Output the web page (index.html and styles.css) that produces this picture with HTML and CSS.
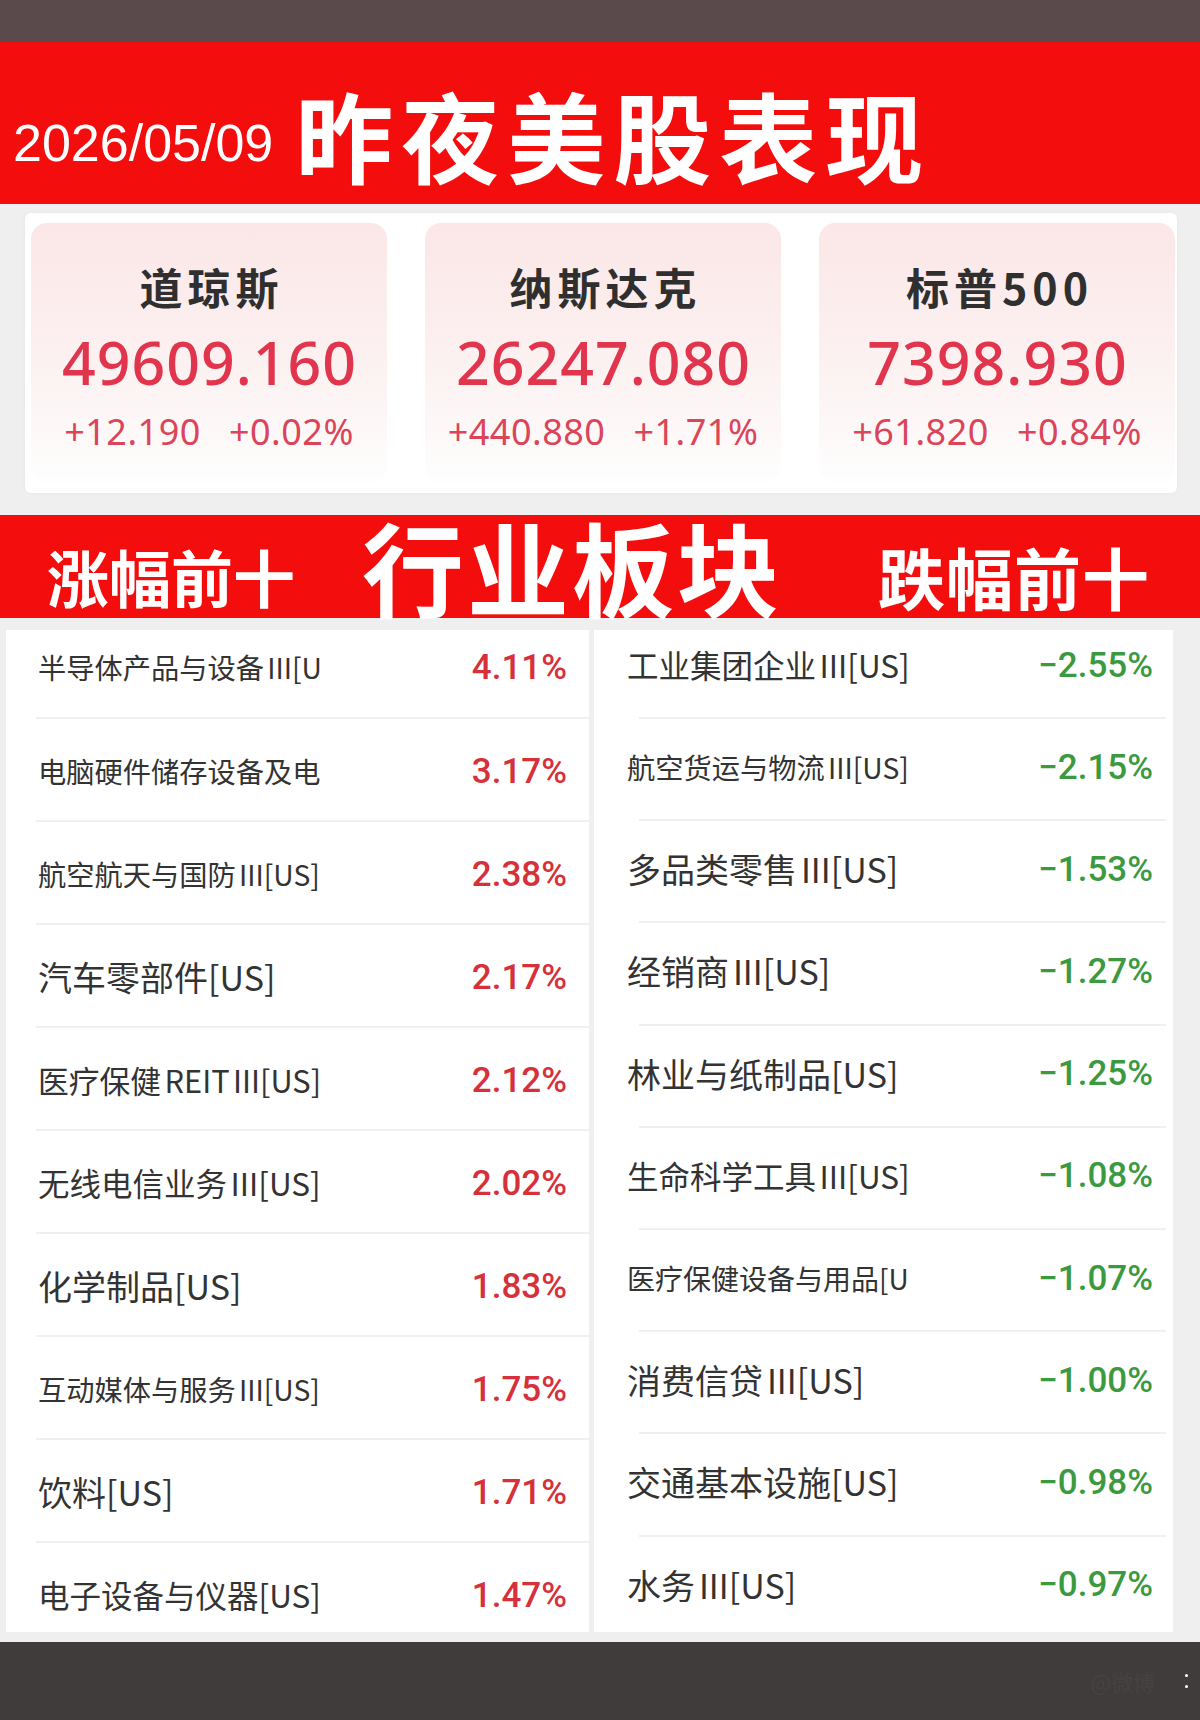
FILE: index.html
```html
<!DOCTYPE html>
<html lang="zh-CN">
<head>
<meta charset="utf-8">
<title>昨夜美股表现</title>
<link rel="stylesheet" href="styles.css">
</head>
<body>
<div class="page">
  <div class="topbar"></div>
  <header class="hero">
    <span class="date">2026/05/09</span>
    <h1 class="title">昨夜美股表现</h1>
  </header>
  <section class="indices">
    <div class="index-wrap">
      <div class="card">
        <div class="card-name">道琼斯</div>
        <div class="card-value">49609.160</div>
        <div class="card-change"><span>+12.190</span><span>+0.02%</span></div>
      </div>
      <div class="card">
        <div class="card-name">纳斯达克</div>
        <div class="card-value">26247.080</div>
        <div class="card-change"><span>+440.880</span><span>+1.71%</span></div>
      </div>
      <div class="card">
        <div class="card-name">标普500</div>
        <div class="card-value">7398.930</div>
        <div class="card-change"><span>+61.820</span><span>+0.84%</span></div>
      </div>
    </div>
  </section>
  <section class="band">
    <span class="band-side">涨幅前十</span>
    <span class="band-title">行业板块</span>
    <span class="band-side right">跌幅前十</span>
  </section>
  <section class="tables">
    <div class="panel up">
      <div class="row"><span class="name">半导体产品与设备 III[U</span><span class="pct">4.11%</span></div>
      <div class="row"><span class="name">电脑硬件储存设备及电</span><span class="pct">3.17%</span></div>
      <div class="row"><span class="name">航空航天与国防 III[US]</span><span class="pct">2.38%</span></div>
      <div class="row"><span class="name">汽车零部件[US]</span><span class="pct">2.17%</span></div>
      <div class="row"><span class="name">医疗保健 REIT III[US]</span><span class="pct">2.12%</span></div>
      <div class="row"><span class="name">无线电信业务 III[US]</span><span class="pct">2.02%</span></div>
      <div class="row"><span class="name">化学制品[US]</span><span class="pct">1.83%</span></div>
      <div class="row"><span class="name">互动媒体与服务 III[US]</span><span class="pct">1.75%</span></div>
      <div class="row"><span class="name">饮料[US]</span><span class="pct">1.71%</span></div>
      <div class="row"><span class="name">电子设备与仪器[US]</span><span class="pct">1.47%</span></div>
    </div>
    <div class="panel down">
      <div class="row"><span class="name">工业集团企业 III[US]</span><span class="pct">−2.55%</span></div>
      <div class="row"><span class="name">航空货运与物流 III[US]</span><span class="pct">−2.15%</span></div>
      <div class="row"><span class="name">多品类零售 III[US]</span><span class="pct">−1.53%</span></div>
      <div class="row"><span class="name">经销商 III[US]</span><span class="pct">−1.27%</span></div>
      <div class="row"><span class="name">林业与纸制品[US]</span><span class="pct">−1.25%</span></div>
      <div class="row"><span class="name">生命科学工具 III[US]</span><span class="pct">−1.08%</span></div>
      <div class="row"><span class="name">医疗保健设备与用品[U</span><span class="pct">−1.07%</span></div>
      <div class="row"><span class="name">消费信贷 III[US]</span><span class="pct">−1.00%</span></div>
      <div class="row"><span class="name">交通基本设施[US]</span><span class="pct">−0.98%</span></div>
      <div class="row"><span class="name">水务 III[US]</span><span class="pct">−0.97%</span></div>
    </div>
  </section>
  <footer class="footer">
    <span class="wm">@微博</span>
    <span class="dots"><i></i><i></i></span>
  </footer>
</div>
<script src="fit.js"></script>
</body>
</html>
```

FILE: styles.css
```css
* { box-sizing: border-box; margin: 0; padding: 0; }
html, body { background: #efefef; }
body {
  width: 1200px;
  height: 1720px;
  overflow: hidden;
  font-family: "Noto Sans CJK SC", "Noto Sans", sans-serif;
}
.page { display: flex; flex-direction: column; width: 1200px; height: 1720px; }

.topbar { height: 42px; background: #5a4a4c; flex: none; }

.hero {
  height: 162px;
  background: #f30d0d;
  display: flex;
  align-items: flex-start;
  padding-left: 13px;
  flex: none;
  color: #fff;
}
.date {
  font-family: "Liberation Sans", Arial, sans-serif;
  font-size: 52px;
  line-height: 1;
  margin-top: 75px;
}
.title {
  font-family: "Noto Sans CJK SC", sans-serif;
  font-size: 98px;
  font-weight: 700;
  line-height: 1;
  letter-spacing: 8px;
  margin-top: 42px;
  margin-left: 22px;
}

.indices { height: 311px; padding: 9px 0 22px 25px; flex: none; }
.index-wrap {
  width: 1152px;
  height: 280px;
  background: #fff;
  border-radius: 6px;
  padding: 10px 2px 10px 6px;
  display: flex;
  gap: 38px;
  box-shadow: 0 0 4px rgba(0, 0, 0, 0.04);
}
.card {
  width: 356px;
  height: 260px;
  flex: none;
  border-radius: 16px;
  background: linear-gradient(180deg, #fbe7e8 0%, #fcefef 45%, #fdf8f8 80%, #fefefe 100%);
  display: flex;
  flex-direction: column;
  align-items: center;
}
.card-name {
  font-size: 43px;
  font-weight: 700;
  line-height: 1;
  letter-spacing: 5px;
  padding-left: 5px;
  color: #2f2f2f;
  margin-top: 42px;
}
.card-value {
  font-family: "Noto Sans", sans-serif;
  font-size: 59px;
  font-weight: 500;
  line-height: 1;
  letter-spacing: 1px;
  padding-left: 1px;
  color: #e1354d;
  margin-top: 25px;
}
.card-change {
  font-family: "Noto Sans", sans-serif;
  font-size: 36px;
  line-height: 1;
  letter-spacing: 0.5px;
  color: #da4559;
  margin-top: 22px;
  display: flex;
  gap: 28px;
}

.band {
  height: 103px;
  background: #f30d0d;
  display: flex;
  align-items: flex-start;
  padding-left: 47px;
  flex: none;
  color: #fff;
  font-weight: 700;
  line-height: 1;
}
.band-side { font-size: 62px; margin-top: 30px; }
.band-title { font-size: 102px; letter-spacing: 3px; margin-top: 0; margin-left: 67px; }
.band-side.right { font-size: 67px; letter-spacing: 1px; margin-top: 27px; margin-left: 96px; }

.tables {
  height: 1024px;
  padding: 12px 0 10px 6px;
  display: flex;
  gap: 5px;
  flex: none;
}
.panel { height: 1002px; background: #fff; overflow: hidden; flex: none; }
.panel.up { width: 583px; }
.panel.down { width: 579px; }
.row {
  display: flex;
  align-items: center;
  justify-content: space-between;
  background-image: linear-gradient(#f0f0f0, #f0f0f0);
  background-repeat: no-repeat;
}
.up .row {
  height: 103px;
  padding: 5px 22px 0 32px;
  background-position: 30px 0;
  background-size: 553px 2px;
}
.up .row:first-child { height: 87px; padding-top: 0; padding-bottom: 12px; background: none; }
.down .row {
  height: 102.2px;
  padding: 0 20px 2px 33px;
  background-position: 45px 0;
  background-size: 527px 2px;
}
.down .row:first-child { height: 87px; padding-bottom: 17px; background: none; }
.name {
  flex: none;
  font-size: 34px;
  line-height: 1;
  word-spacing: -0.11em;
  color: #333;
  white-space: nowrap;
}
.pct {
  flex: none;
  font-family: Roboto, "Noto Sans", sans-serif;
  font-size: 35px;
  font-weight: 500;
  line-height: 1;
}
.up .pct { color: #d6303b; }
.down .pct { color: #3b9a3f; }

.footer {
  height: 78px;
  background: #403c3c;
  display: flex;
  align-items: center;
  justify-content: flex-end;
  padding-right: 12px;
  flex: none;
}
.wm { font-size: 22px; color: #474242; margin-right: 30px; }
.dots { display: flex; flex-direction: column; gap: 8px; }
.dots i { display: block; width: 3px; height: 3px; background: #fff; border-radius: 50%; }
```

FILE: fit.js
```js
document.querySelectorAll('.name').forEach(function (el) {
  var size = 34;
  el.style.fontSize = size + 'px';
  while (el.getBoundingClientRect().width > 284 && size > 18) {
    size -= 0.25;
    el.style.fontSize = size + 'px';
  }
});
```
